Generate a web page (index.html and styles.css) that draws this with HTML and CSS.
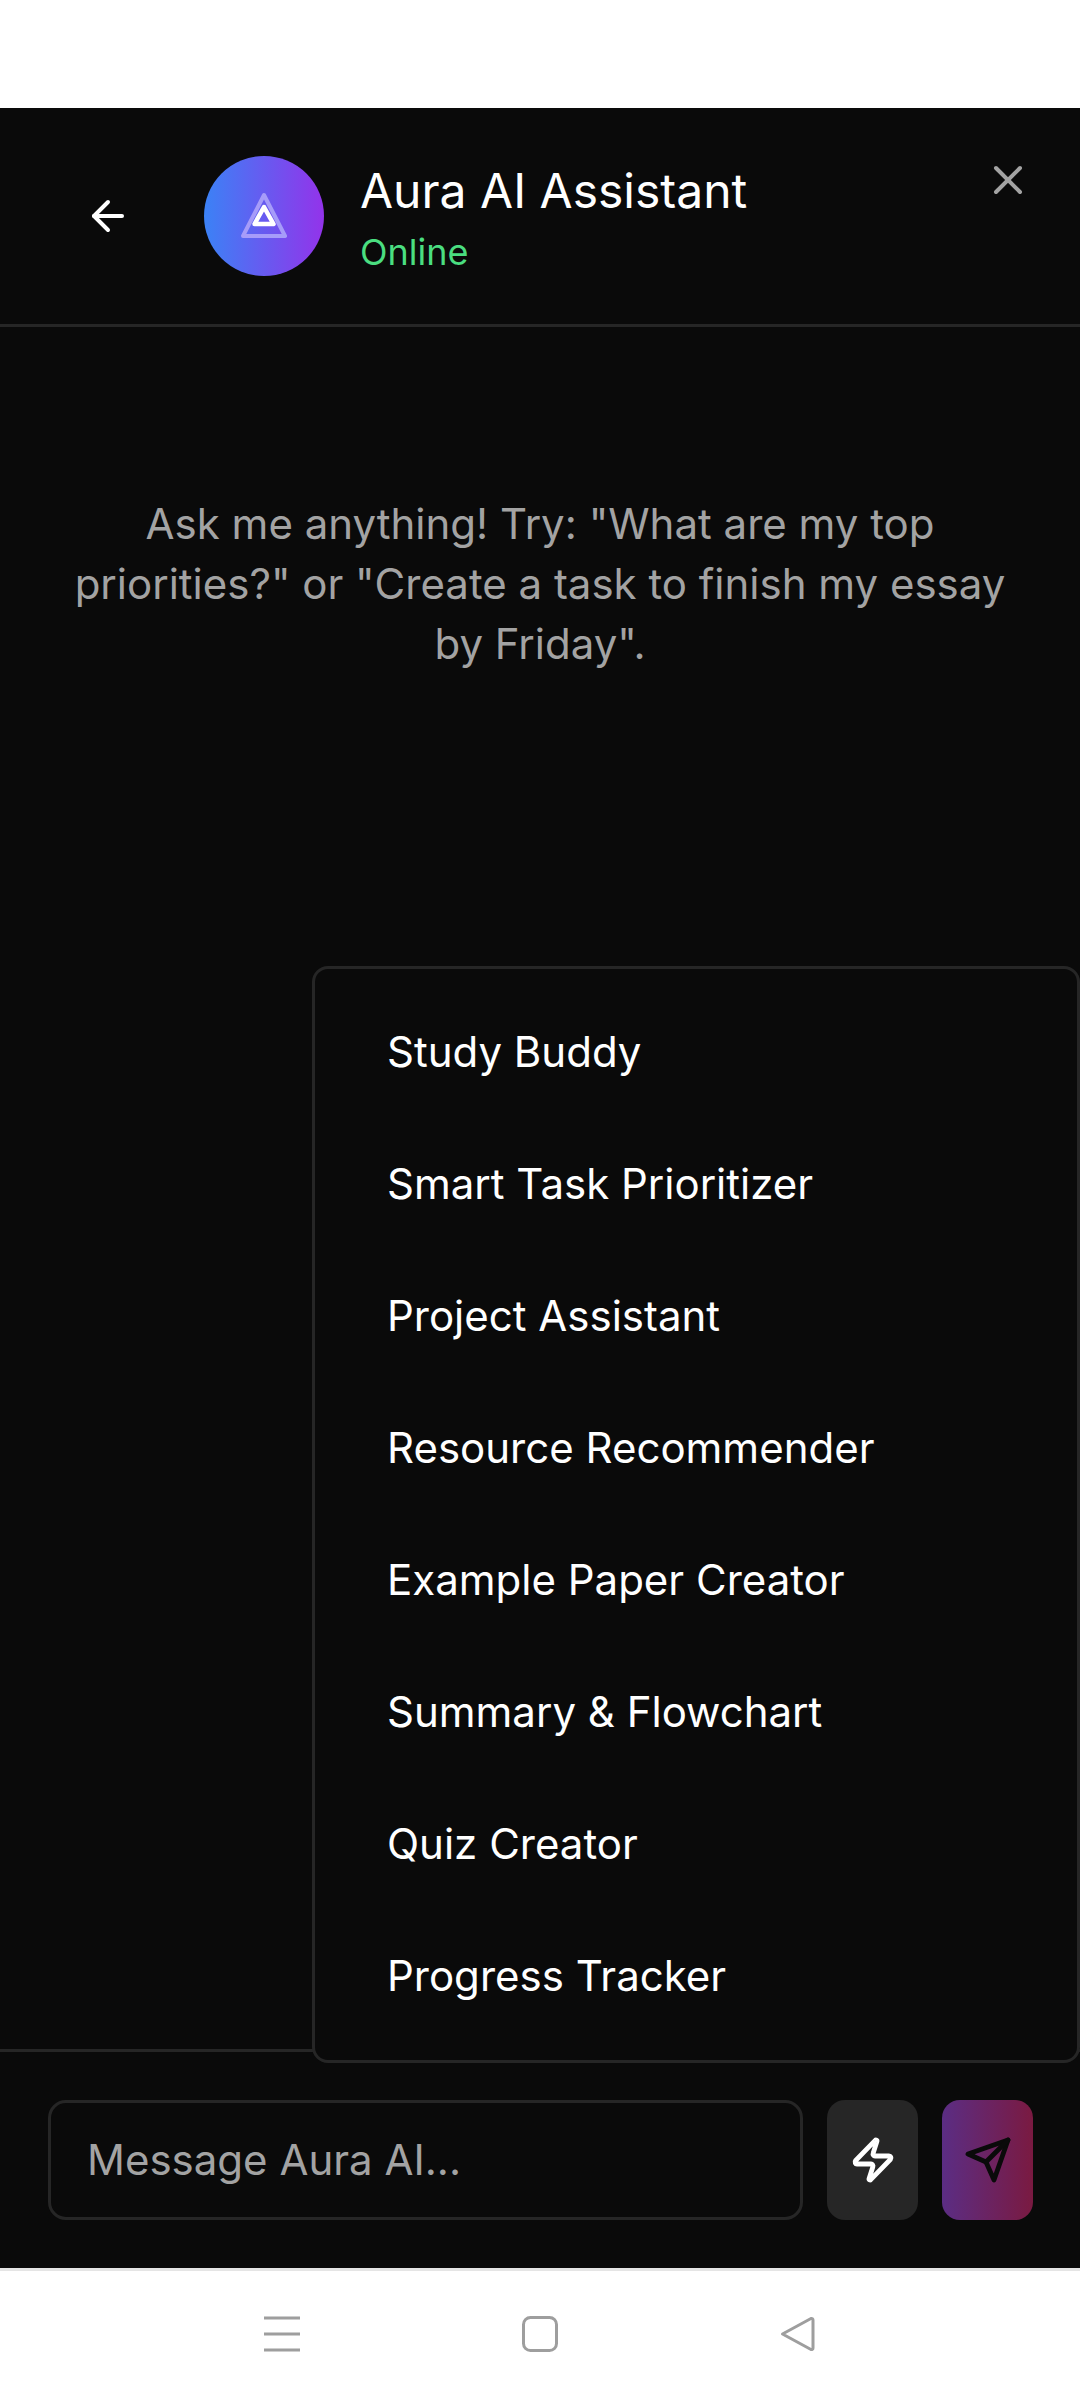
FILE: index.html
```html
<!DOCTYPE html>
<html lang="en">
<head>
    <meta charset="UTF-8">
    <meta name="viewport" content="width=device-width, initial-scale=1.0">
    <title>Aura AI Assistant</title>
    <link rel="stylesheet" href="styles.css">
</head>
<body>
    <!-- Status bar area -->
    <div class="top-space"></div>

    <main class="chat">
        <!-- Header -->
        <header class="chat-header">
            <button class="back-btn" type="button" aria-label="Back">
                <svg class="icon-back" viewBox="0 0 24 24"><path d="m12 19-7-7 7-7"/><path d="M19 12H5"/></svg>
            </button>
            <div class="avatar">
                <svg class="avatar-logo" viewBox="0 0 50 50">
                    <path class="logo-outer" d="M25 4 46 45H4Z"/>
                    <path class="logo-inner" d="M25 16 34.5 33H15.5Z"/>
                </svg>
            </div>
            <div class="title-block">
                <div class="title">Aura AI Assistant</div>
                <div class="status">Online</div>
            </div>
            <button class="close-btn" type="button" aria-label="Close">
                <svg class="icon-close" viewBox="0 0 24 24"><path d="M18 6 6 18"/><path d="m6 6 12 12"/></svg>
            </button>
        </header>

        <!-- Messages -->
        <section class="messages">
            <p class="intro">Ask me anything! Try: "What are my top priorities?" or "Create a task to finish my essay by Friday".</p>
        </section>

        <!-- Tools menu -->
        <ul class="tools-menu">
            <li>Study Buddy</li>
            <li>Smart Task Prioritizer</li>
            <li>Project Assistant</li>
            <li>Resource Recommender</li>
            <li>Example Paper Creator</li>
            <li>Summary &amp; Flowchart</li>
            <li>Quiz Creator</li>
            <li>Progress Tracker</li>
        </ul>

        <!-- Composer -->
        <footer class="composer">
            <div class="message-input">Message Aura AI...</div>
            <button class="tools-btn" type="button" aria-label="Tools">
                <svg class="icon-btn" viewBox="0 0 24 24"><path d="M4 14a1 1 0 0 1-.78-1.63l9.9-10.2a.5.5 0 0 1 .86.46l-1.92 6.02A1 1 0 0 0 13 10h7a1 1 0 0 1 .78 1.63l-9.9 10.2a.5.5 0 0 1-.86-.46l1.92-6.02A1 1 0 0 0 11 14z"/></svg>
            </button>
            <button class="send-btn" type="button" aria-label="Send">
                <svg class="icon-btn" viewBox="0 0 24 24"><path d="m22 2-7 20-4-9-9-4Z"/><path d="M22 2 11 13"/></svg>
            </button>
        </footer>
    </main>

    <!-- Android navigation -->
    <nav class="system-nav">
        <svg class="nav-menu" viewBox="0 0 36 36"><path d="M0 2h36M0 18h36M0 34h36"/></svg>
        <svg class="nav-home" viewBox="0 0 36 36"><rect x="1.5" y="1.5" width="33" height="33" rx="7"/></svg>
        <svg class="nav-back" viewBox="0 0 36 36"><path d="M2.5 18 31 2.5a1.5 1.5 0 0 1 2 1.5v28a1.5 1.5 0 0 1-2 1.5Z"/></svg>
    </nav>
</body>
</html>
```

FILE: styles.css
```css
* {
    box-sizing: border-box;
}

body {
    margin: 0;
    height: 2400px;
    display: flex;
    flex-direction: column;
    background-color: #fff;
    font-family: Inter, "Noto Sans", sans-serif;
}

button {
    padding: 0;
    border: none;
    background: none;
    font: inherit;
}

svg {
    display: block;
    fill: none;
    stroke-linecap: round;
    stroke-linejoin: round;
}

.top-space {
    height: 108px;
}

/* Chat panel */
.chat {
    position: relative;
    height: 2160px;
    display: flex;
    flex-direction: column;
    background-color: #0a0a0a;
    color: #fff;
}

.chat-header {
    height: 219px;
    display: flex;
    align-items: flex-start;
    padding: 48px 0 0 84px;
    border-bottom: 3px solid #262626;
}

.back-btn {
    width: 48px;
    height: 120px;
    display: flex;
    align-items: center;
    justify-content: center;
    margin-right: 72px;
}

.icon-back {
    width: 48px;
    height: 48px;
    stroke: #fff;
    stroke-width: 2;
}

.avatar {
    width: 120px;
    height: 120px;
    display: flex;
    align-items: center;
    justify-content: center;
    margin-right: 36px;
    border-radius: 50%;
    background: linear-gradient(to right, #3b82f6, #9333ea);
}

.avatar-logo {
    width: 50px;
    height: 50px;
}

.logo-outer {
    stroke: #a69cf9;
    stroke-width: 4;
}

.logo-inner {
    stroke: #fff;
    stroke-width: 4.5;
}

.title {
    margin-top: -1px;
    font-size: 48px;
    line-height: 72px;
}

.status {
    font-size: 36px;
    line-height: 50px;
    color: #4ade80;
}

.close-btn {
    position: absolute;
    top: 48px;
    right: 48px;
}

.icon-close {
    width: 48px;
    height: 48px;
    stroke: #a3a3a3;
    stroke-width: 2;
}

/* Messages */
.messages {
    flex: 1;
    padding: 167px 70px 0;
}

.intro {
    margin: 0;
    font-size: 42px;
    line-height: 60px;
    text-align: center;
    color: #a3a3a3;
}

/* Tools menu */
.tools-menu {
    position: absolute;
    top: 858px;
    right: 0;
    width: 768px;
    height: 1097px;
    margin: 0;
    padding: 17px 0;
    list-style: none;
    background-color: #0a0a0a;
    border: 3px solid #262626;
    border-radius: 16px;
}

.tools-menu li {
    height: 132px;
    padding-left: 72px;
    font-size: 42px;
    line-height: 132px;
}

/* Composer */
.composer {
    height: 219px;
    display: flex;
    gap: 24px;
    padding: 48px 47px 48px 48px;
    border-top: 3px solid #262626;
}

.message-input {
    width: 755px;
    height: 120px;
    padding-left: 36px;
    border: 3px solid #262626;
    border-radius: 18px;
    font-size: 42px;
    line-height: 114px;
    color: #a3a3a3;
}

.tools-btn,
.send-btn {
    width: 91px;
    height: 120px;
    display: flex;
    align-items: center;
    justify-content: center;
    border-radius: 18px;
}

.tools-btn {
    background-color: #262626;
}

.send-btn {
    background: linear-gradient(to right, #5b2d84, #7a1a41);
}

.icon-btn {
    width: 48px;
    height: 48px;
    stroke-width: 2.4;
}

.tools-btn .icon-btn {
    stroke: #fff;
}

.send-btn .icon-btn {
    stroke: #0a0a0a;
}

/* System navigation */
.system-nav {
    position: relative;
    flex: 1;
    border-top: 3px solid #e5e5e5;
}

.system-nav svg {
    position: absolute;
    top: 45px;
    width: 36px;
    height: 36px;
    stroke: #9e9e9e;
    stroke-width: 3;
}

.nav-menu {
    left: 264px;
}

.nav-home {
    left: 522px;
}

.nav-back {
    left: 780px;
}
```
